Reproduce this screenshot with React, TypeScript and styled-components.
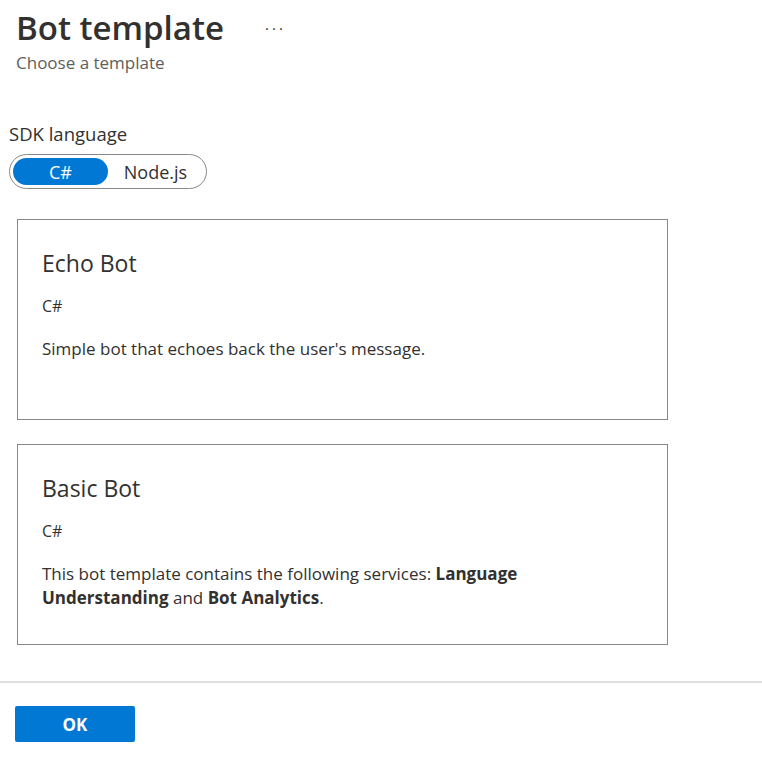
import styled, { createGlobalStyle } from "styled-components";

const Global = createGlobalStyle`
  body {
    margin: 0;
    background: #fff;
    font-family: "Open Sans", "Noto Sans", sans-serif;
    color: #323130;
  }
`;

const App = () => {
  return (
    <>
      <Global />
      <Page>
        <Header>
          <TitleRow>
            <Title>Bot template</Title>
            <More>···</More>
          </TitleRow>
          <Subtitle>Choose a template</Subtitle>
        </Header>
        <Field>
          <Label>SDK language</Label>
          <Toggle>
            <ToggleOption $active>C#</ToggleOption>
            <ToggleOption>Node.js</ToggleOption>
          </Toggle>
        </Field>
        <Cards>
          <Card>
            <CardTitle>Echo Bot</CardTitle>
            <CardLang>C#</CardLang>
            <CardText>Simple bot that echoes back the user's message.</CardText>
          </Card>
          <Card>
            <CardTitle>Basic Bot</CardTitle>
            <CardLang>C#</CardLang>
            <CardText>
              This bot template contains the following services:{" "}
              <b>Language</b> <b>Understanding</b> and <b>Bot Analytics</b>.
            </CardText>
          </Card>
        </Cards>
        <Footer>
          <OkButton>OK</OkButton>
        </Footer>
      </Page>
    </>
  );
};

const Page = styled.div`
  width: 762px;
  height: 765px;
  display: flex;
  flex-direction: column;
`;

const Header = styled.div`
  padding: 6px 16px 0;
`;

const TitleRow = styled.div`
  display: flex;
  align-items: center;
  gap: 41px;
`;

const Title = styled.h1`
  margin: 0;
  font-size: 33px;
  font-weight: 600;
  line-height: 44px;
  color: #323130;
`;

const More = styled.span`
  font-size: 15px;
  color: #323130;
  letter-spacing: 3px;
`;

const Subtitle = styled.div`
  margin-top: 2px;
  font-size: 17px;
  line-height: 22px;
  color: #605e5c;
`;

const Field = styled.div`
  padding: 48px 9px 0;
`;

const Label = styled.div`
  font-size: 18.5px;
  line-height: 24px;
  color: #323130;
`;

const Toggle = styled.div`
  margin-top: 8px;
  width: 198px;
  height: 35px;
  box-sizing: border-box;
  border: 1px solid #8a8886;
  border-radius: 18px;
  padding: 3px;
  display: flex;
`;

const ToggleOption = styled.div<{ $active?: boolean }>`
  width: 95px;
  border-radius: 14px;
  display: flex;
  align-items: center;
  justify-content: center;
  font-size: 18px;
  background: ${(p) => (p.$active ? "#0078d4" : "transparent")};
  color: ${(p) => (p.$active ? "#fff" : "#323130")};
`;

const Cards = styled.div`
  padding: 30px 0 0 17px;
  display: flex;
  flex-direction: column;
  gap: 24px;
`;

const Card = styled.div`
  width: 651px;
  height: 201px;
  box-sizing: border-box;
  border: 1px solid #8a8886;
  padding: 28px 24px 0;
`;

const CardTitle = styled.div`
  font-size: 23px;
  line-height: 30px;
  color: #323130;
`;

const CardLang = styled.div`
  margin-top: 17px;
  font-size: 16px;
  line-height: 22px;
  color: #323130;
`;

const CardText = styled.div`
  margin-top: 20px;
  font-size: 17px;
  line-height: 24px;
  color: #323130;
  max-width: 540px;

  b {
    font-weight: 700;
  }
`;

const Footer = styled.div`
  margin-top: 36px;
  border-top: 2px solid #e1dfdd;
  padding: 23px 15px 0;
`;

const OkButton = styled.button`
  width: 120px;
  height: 36px;
  border: none;
  border-radius: 2px;
  background: #0078d4;
  color: #fff;
  font-family: inherit;
  font-size: 17px;
  font-weight: 700;
`;

export default App;
